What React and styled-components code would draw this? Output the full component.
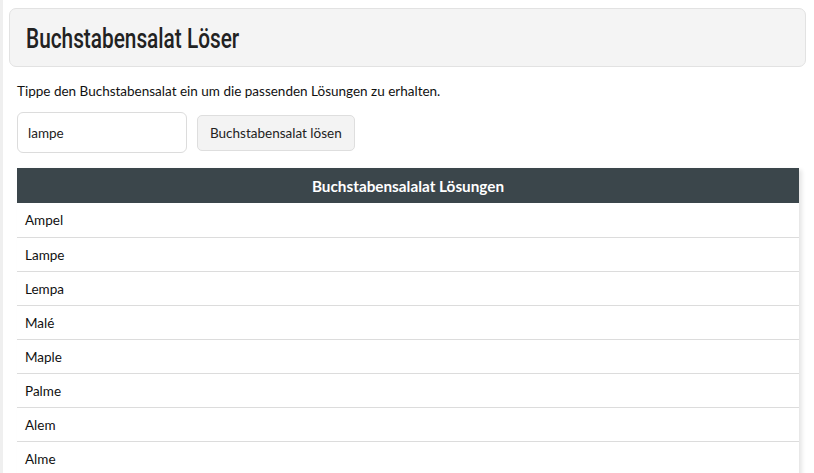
import React from "react";
import styled, { createGlobalStyle } from "styled-components";

const Global = createGlobalStyle`
  html, body { margin: 0; padding: 0; background: #fff; }
  body { font-family: Lato, "Open Sans", sans-serif; color: #222; overflow: hidden; }
  * { box-sizing: border-box; }
`;

const Page = styled.div`
  border-left: 3px solid #efefef;
  padding: 8px 8px 0 6px;
  min-height: 473px;
`;

const Header = styled.header`
  background: #f4f4f4;
  border: 1px solid #e2e2e2;
  border-radius: 7px;
  height: 59px;
  display: flex;
  align-items: center;
  padding: 0 16px;
`;

const Title = styled.h1`
  margin: 1px 0 0 0;
  font-family: Roboto, "DejaVu Sans", sans-serif;
  font-weight: 500;
  font-size: 28.5px;
  color: #222;
  transform: scaleX(0.73);
  transform-origin: left center;
  white-space: nowrap;
`;

const Content = styled.main`
  padding: 15px 8px 0 8px;
`;

const Intro = styled.p`
  margin: 0 0 12px 0;
  font-size: 13.5px;
  line-height: 18px;
  color: #111;
`;

const Form = styled.form`
  display: flex;
  align-items: center;
  gap: 10px;
  margin-bottom: 15px;
`;

const Input = styled.input`
  width: 170px;
  height: 41px;
  border: 1px solid #dcdcdc;
  border-radius: 6px;
  padding: 0 10px;
  font-family: Lato, sans-serif;
  font-size: 13.5px;
  color: #222;
  outline: none;
`;

const Button = styled.button`
  height: 36px;
  padding: 0 12px;
  background: #f3f3f3;
  border: 1px solid #dedede;
  border-radius: 5px;
  font-family: Lato, sans-serif;
  font-size: 13.5px;
  color: #222;
`;

const Table = styled.table`
  width: 782px;
  border-collapse: collapse;
  box-shadow: 3px 2px 4px rgba(0, 0, 0, 0.1);
  background: #fff;
`;

const Th = styled.th`
  background: #3b464b;
  color: #fff;
  font-weight: bold;
  font-size: 15.3px;
  height: 35px;
  text-align: center;
  padding: 0;
`;

const Td = styled.td`
  height: 34px;
  padding: 1px 8px 0 8px;
  font-size: 13.5px;
  color: #111;
  border-bottom: 1px solid #dcdcdc;
`;

const words = ["Ampel", "Lampe", "Lempa", "Malé", "Maple", "Palme", "Alem", "Alme"];

export default function App() {
  return (
    <>
      <Global />
      <Page>
        <Header>
          <Title>Buchstabensalat Löser</Title>
        </Header>
        <Content>
          <Intro>Tippe den Buchstabensalat ein um die passenden Lösungen zu erhalten.</Intro>
          <Form onSubmit={(e) => e.preventDefault()}>
            <Input defaultValue="lampe" />
            <Button type="submit">Buchstabensalat lösen</Button>
          </Form>
          <Table>
            <thead>
              <tr>
                <Th>Buchstabensalalat Lösungen</Th>
              </tr>
            </thead>
            <tbody>
              {words.map((w) => (
                <tr key={w}>
                  <Td>{w}</Td>
                </tr>
              ))}
            </tbody>
          </Table>
        </Content>
      </Page>
    </>
  );
}
